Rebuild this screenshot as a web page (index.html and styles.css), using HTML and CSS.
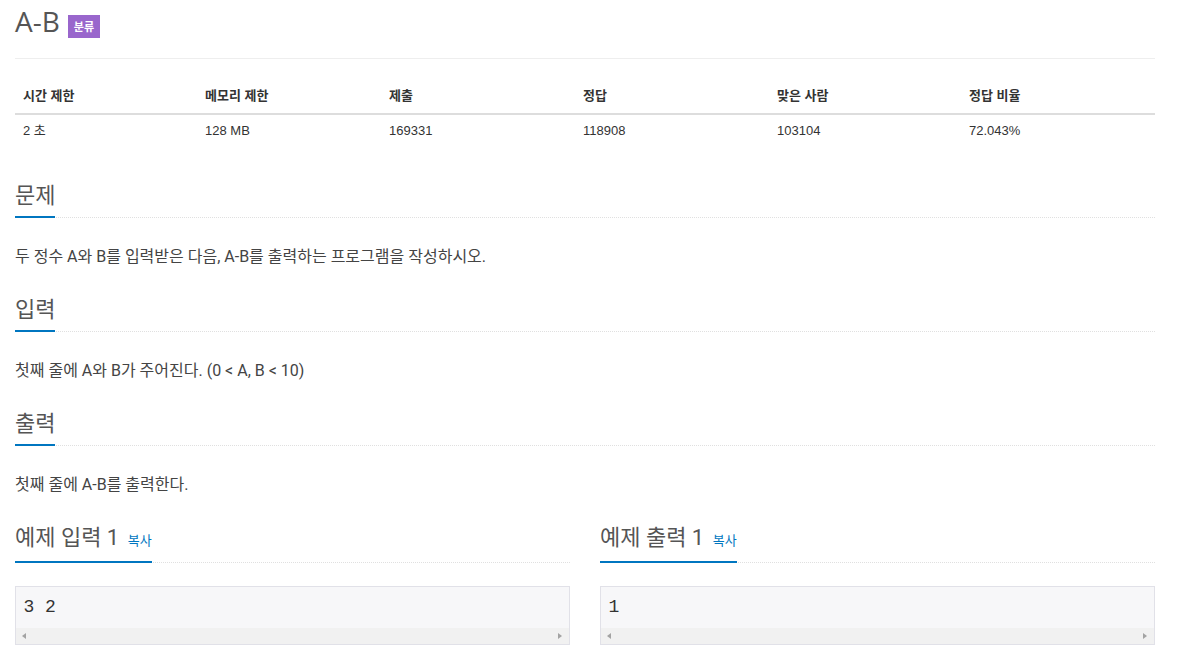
FILE: index.html
```html
<!DOCTYPE html>
<html lang="ko">
<head>
<meta charset="utf-8">
<title>A-B</title>
<link rel="stylesheet" href="styles.css">
</head>
<body>
<div class="container">
  <div class="page-header">
    <h1 class="title">A-B</h1>
    <span class="badge">분류</span>
  </div>

  <table class="info">
    <colgroup>
      <col class="c1"><col class="c2"><col class="c3"><col class="c4"><col class="c5"><col class="c6">
    </colgroup>
    <thead>
      <tr><th>시간 제한</th><th>메모리 제한</th><th>제출</th><th>정답</th><th>맞은 사람</th><th>정답 비율</th></tr>
    </thead>
    <tbody>
      <tr><td>2 초</td><td>128 MB</td><td>169331</td><td>118908</td><td>103104</td><td>72.043%</td></tr>
    </tbody>
  </table>

  <section class="section first">
    <div class="headline"><h2>문제</h2></div>
    <p class="text">두 정수 A와 B를 입력받은 다음, A-B를 출력하는 프로그램을 작성하시오.</p>
  </section>

  <section class="section">
    <div class="headline"><h2>입력</h2></div>
    <p class="text">첫째 줄에 A와 B가 주어진다. (0 &lt; A, B &lt; 10)</p>
  </section>

  <section class="section">
    <div class="headline"><h2>출력</h2></div>
    <p class="text">첫째 줄에 A-B를 출력한다.</p>
  </section>

  <div class="samples">
    <section class="sample">
      <div class="headline sample-head"><h2>예제 입력 1 <span class="copy">복사</span></h2></div>
      <div class="pre-box">
        <pre class="sampledata">3 2</pre>
        <div class="hscroll"><span class="arr left"></span><span class="arr right"></span></div>
      </div>
    </section>
    <section class="sample">
      <div class="headline sample-head"><h2>예제 출력 1 <span class="copy">복사</span></h2></div>
      <div class="pre-box">
        <pre class="sampledata">1</pre>
        <div class="hscroll"><span class="arr left"></span><span class="arr right"></span></div>
      </div>
    </section>
  </div>
</div>
</body>
</html>
```

FILE: styles.css
```css
* { box-sizing: border-box; }
html, body { margin: 0; padding: 0; background: #fff; }
body {
  font-family: Roboto, "Noto Sans CJK KR", sans-serif;
  color: #333;
}
.container {
  width: 1170px;
  padding: 0 15px;
}
.page-header {
  display: flex;
  align-items: flex-start;
  height: 59px;
  padding-top: 6px;
  border-bottom: 1px solid #eeeeee;
}
.title {
  margin: 0;
  font-family: "Open Sans", "Noto Sans CJK KR", sans-serif;
  font-weight: 400;
  font-size: 28px;
  line-height: 31px;
  color: #555;
}
.badge {
  margin: 9px 0 0 8px;
  height: 23px;
  padding: 0 6px;
  background: #9966cc;
  color: #fff;
  font-family: "Noto Sans CJK KR", sans-serif;
  font-weight: 700;
  font-size: 11px;
  line-height: 23px;
}
.info {
  width: 1140px;
  table-layout: fixed;
  border-collapse: collapse;
  margin-top: 18px;
  font-family: "Liberation Sans", "Noto Sans CJK KR", sans-serif;
  font-size: 13px;
  color: #333;
}
.c1 { width: 182px; }
.c2 { width: 184px; }
.c3 { width: 194px; }
.c4 { width: 194px; }
.c5 { width: 192px; }
.c6 { width: 194px; }
.info th {
  text-align: left;
  font-weight: 700;
  padding: 9px 8px 7px;
  line-height: 20px;
  border-bottom: 2px solid #dddddd;
}
.info td {
  padding: 6px 8px 10px;
  line-height: 20px;
}
.section { margin-top: 27px; }
.section.first { margin-top: 30px; }
.headline {
  border-bottom: 1px dotted #e0e0e0;
  margin-bottom: 28px;
  line-height: 0;
}
.headline h2 {
  display: inline-block;
  margin: 0 0 -1px;
  padding-top: 3px;
  padding-bottom: 8px;
  border-bottom: 2px solid #0076c0;
  font-family: Roboto, "Noto Sans CJK KR", sans-serif;
  font-weight: 400;
  font-size: 22px;
  line-height: 24px;
  color: #555;
}
.text {
  margin: 0;
  font-size: 16px;
  line-height: 22px;
  color: #444;
}
.samples {
  display: grid;
  grid-template-columns: 555px 555px;
  column-gap: 30px;
  margin-top: 27px;
}
.headline.sample-head { margin-bottom: 23px; }
.copy {
  font-size: 13px;
  color: #0076c0;
  margin-left: 3px;
}
.pre-box {
  border: 1px solid #e1e1e8;
  background: #f7f7f9;
}
.sampledata {
  margin: 0;
  padding: 8.5px 8px 10.5px 7.5px;
  font-family: "Liberation Mono", monospace;
  font-size: 18px;
  line-height: 22px;
  color: #333;
}
.hscroll {
  height: 16px;
  background: #f1f1f1;
  display: flex;
  align-items: center;
  justify-content: space-between;
  padding: 0 7px 0 6px;
}
.arr {
  width: 0;
  height: 0;
  border-top: 3.5px solid transparent;
  border-bottom: 3.5px solid transparent;
}
.arr.left { border-right: 4px solid #a3a3a3; }
.arr.right { border-left: 4px solid #a3a3a3; }
```
